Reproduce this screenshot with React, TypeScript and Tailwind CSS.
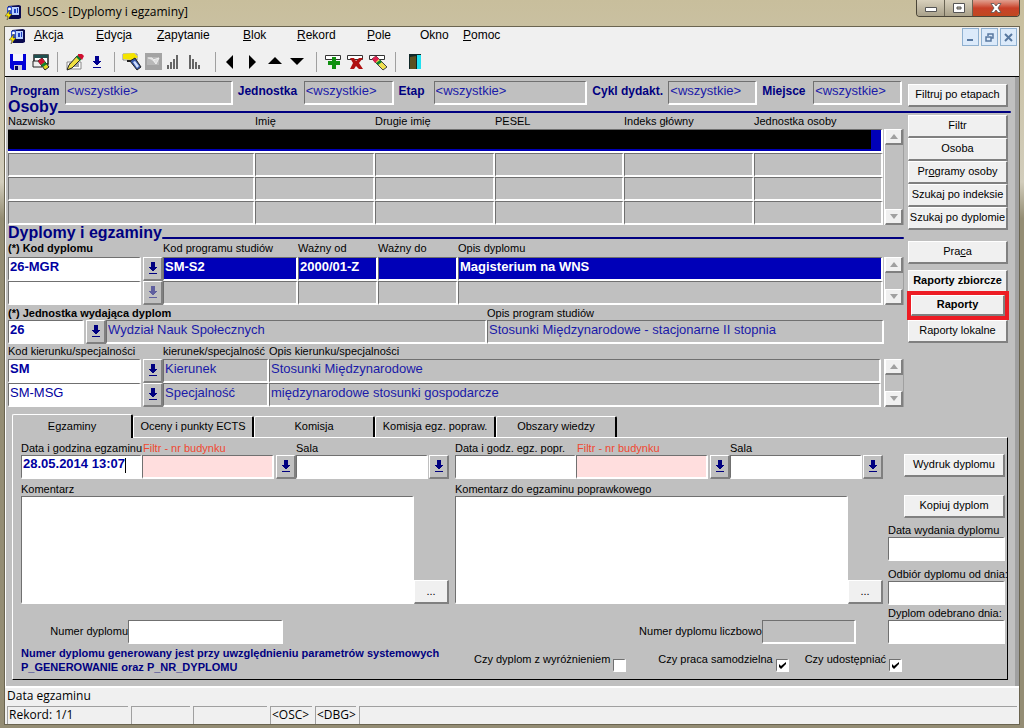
import { useState } from "react";
import type { ReactNode } from "react";

const label = "text-[11px] leading-[13px] text-black whitespace-nowrap";
const sunken = "border-t border-l border-b-2 border-r-2 border-t-[#707070] border-l-[#707070] border-b-white border-r-white";
const raised = "border border-b-2 border-r-2 border-t-white border-l-white border-b-[#808080] border-r-[#808080]";

type FieldProps = {
  name: string;
  id?: string;
  value?: string;
  tone?: "white" | "gray" | "pink" | "selected";
  bold?: boolean;
};

const tones = {
  white: "bg-white text-[#0000a0]",
  gray: "bg-[#c0c0c0] text-[#1a1aa8]",
  pink: "bg-[#ffdede] text-[#1a1aa8]",
  selected: "bg-[#0000b8] text-white",
};

function Field({ name, id, value = "", tone = "white", bold = false }: FieldProps) {
  return (
    <input
      id={id}
      aria-label={id ? undefined : name}
      defaultValue={value}
      readOnly={tone === "gray" || tone === "selected"}
      className={`block h-6 w-full min-w-0 rounded-none px-px pb-1 text-[13px] outline-none ${sunken} ${tones[tone]} ${
        bold ? "font-bold" : ""
      }`}
    />
  );
}

function LovButton({ name, disabled = false }: { name: string; disabled?: boolean }) {
  return (
    <button
      aria-label={name}
      disabled={disabled}
      className={`ml-auto flex h-6 w-5 items-center justify-center bg-[#c0c0c0] ${raised}`}
    >
      <svg width="10" height="13" viewBox="0 0 10 13" shapeRendering="crispEdges" className={disabled ? "opacity-50" : ""}>
        <path d="M3 0h4v5h2v1H8v1H7v1H6v1H4V8H3V7H2V6H1V5h2zM1 11h8v1H1z" fill="#000080" />
      </svg>
    </button>
  );
}

function PushButton({ children, className = "h-[23px]" }: { children: ReactNode; className?: string }) {
  return (
    <button
      className={`w-full bg-[#f0f0f0] text-center text-[11px] leading-[13px] whitespace-nowrap text-black ${raised} ${className}`}
    >
      {children}
    </button>
  );
}

function ScrollBar({ name, className = "" }: { name: string; className?: string }) {
  return (
    <div role="group" aria-label={name} className={`flex w-5 shrink-0 flex-col border-x border-l-white border-r-[#a0a0a0] bg-[#c0c0c0] ${className}`}>
      <button aria-label="W górę" className={`flex h-4 items-center justify-center bg-[#f0f0f0] ${raised}`}>
        <svg width="8" height="5" viewBox="0 0 8 5">
          <path d="M4 0l4 5H0z" fill="#a0a0a0" />
        </svg>
      </button>
      <div className="flex-1" />
      <button aria-label="W dół" className={`flex h-4 items-center justify-center bg-[#f0f0f0] ${raised}`}>
        <svg width="8" height="5" viewBox="0 0 8 5">
          <path d="M4 5l4-5H0z" fill="#a0a0a0" />
        </svg>
      </button>
    </div>
  );
}

function SectionTitle({ children, className = "" }: { children: ReactNode; className?: string }) {
  return (
    <div className={`flex h-4 items-end ${className}`}>
      <h2 className="text-[16px] leading-4 font-bold text-[#000080]">{children}</h2>
      <div className="mb-[2px] h-[2px] flex-1 rounded-full bg-[#000080]" />
    </div>
  );
}

function AppLogo() {
  return (
    <svg width="17" height="16" viewBox="0 0 17 16">
      <path d="M3 2l11-1 2 1v12l-2 1H4z" fill="#0a0a50" />
      <path d="M2 3l5-1v8l-5 1z" fill="#3050c8" />
      <path d="M7 3h7v8H7z" fill="#b8d0ff" />
      <path d="M9 5h2v4H9zM12 4h1v5h-1z" fill="#2040c0" />
      <circle cx="4.500" cy="5" r="1.500" fill="#fff" />
      <path d="M5 6L0 12h3l-1 4 5-6H4z" fill="#ffe800" stroke="#333" strokeWidth=".5" />
    </svg>
  );
}

// Toolbar drawings share a 22x22 box
const icons: Record<string, ReactNode> = {
  save: (
    <>
      <path d="M3 3h16v16H5l-2-2z" fill="#0000d8" />
      <path d="M6 3h10v7H6z" fill="#f4f4ff" />
      <path d="M7 14h8v5H7z" fill="#c8c8d8" />
      <path d="M8 15h3v4H8z" fill="#000060" />
    </>
  ),
  printForm: (
    <>
      <path d="M5 4h14v9H5z" fill="#fff" stroke="#222" strokeWidth="1.500" />
      <path d="M5 4h14v3H5z" fill="#205050" />
      <path d="M4 10h9v6H4z" fill="#eee" stroke="#222" />
      <path d="M9 10l4-3 7 9-4 3z" fill="#e0d820" stroke="#222" />
      <path d="M9 10l4-3 3 4-4 3z" fill="#d01030" />
      <path d="M12 14l4-3 2 2-4 3z" fill="#108030" />
    </>
  ),
  edit: (
    <>
      <path d="M3 11h14v7H3z" fill="#fff" stroke="#888" />
      <path d="M5 13h10M5 15h10" stroke="#444" />
      <path d="M3 19l2-5L13 5l4 3-9 9z" fill="#f0e040" stroke="#222" />
      <path d="M12 6l2-2 4 3-2 3z" fill="#108030" />
      <path d="M14 3h4l2 2-2 4-4-4z" fill="#d01030" />
    </>
  ),
  list: <path d="M9 5h4v5h2v1h-1v1h-1v1h-1v1h-2v-1H9v-1H8v-1H7v-1h2zM7 16h8v1H7z" fill="#000090" />,
  query: (
    <>
      <path d="M2 3h14v6H2z" fill="#fff" stroke="#888" />
      <path d="M2 3l11-1 4 4-5 3-10-1z" fill="#f4e400" />
      <path d="M6 9h10v2H6z" fill="#222" />
      <path d="M9 10l5-3 6 9-4 3z" fill="#3858a8" stroke="#222" />
      <path d="M12 11l2-1 4 5-2 2z" fill="#d0e0ff" />
    </>
  ),
  cancelQuery: (
    <>
      <path d="M2 2h17v17H2z" fill="#a4a4a4" />
      <path d="M4 6h12v8H4z" fill="#b8b8b8" />
      <path d="M5 7h4l3 4M10 9l6-2-3 6z" stroke="#eee" fill="#ddd" />
    </>
  ),
  barsUp: <path d="M2 14h2v4H2zM5 11h2v7H5zM8 8h2v10H8zM11 4h2v14h-2z" fill="#666" />,
  barsDown: <path d="M2 4h2v14H2zM5 8h2v10H5zM8 11h2v7H8zM11 14h2v4h-2z" fill="#666" />,
  left: <path d="M11 4v14L4 11z" fill="#000" />,
  right: <path d="M5 4v14l7-7z" fill="#000" />,
  up: <path d="M2 13h14L9 6z" fill="#000" />,
  down: <path d="M2 7h14l-7 7z" fill="#000" />,
  insert: (
    <>
      <path d="M2.500 4.500h15v4h-15z" fill="#fff" stroke="#333" />
      <path d="M9 6h4v4h4v4h-4v4H9v-4H5v-4h4z" fill="#109010" />
    </>
  ),
  remove: (
    <>
      <path d="M2.500 4.500h15v4h-15z" fill="#fff" stroke="#333" />
      <path d="M5 7h4l2 3 3-3h4l-4 5 4 6h-4l-3-3-2 3H5l3-6z" fill="#b01010" />
    </>
  ),
  clear: (
    <>
      <path d="M2.500 4.500h15v4h-15z" fill="#fff" stroke="#333" />
      <path d="M5 8l4-3 11 11-4 3z" fill="#f0e050" stroke="#444" />
      <path d="M5 8l4-3 3 3-4 4z" fill="#e02050" />
      <path d="M9 12l4-3 2 2-4 3z" fill="#108030" />
    </>
  ),
  exit: (
    <>
      <path d="M7 3h12v15H7z" fill="#102828" />
      <path d="M15 4h4v14h-4z" fill="#20e0f0" />
      <path d="M8 6l6-1v13H8z" fill="#5a5020" />
    </>
  ),
};

const toolbar = [
  [["save", "Zapisz"], ["printForm", "Drukuj"]],
  [["edit", "Edytuj"], ["list", "Lista wartości"]],
  [["query", "Zapytanie"], ["cancelQuery", "Anuluj zapytanie"], ["barsUp", "Sortuj rosnąco"], ["barsDown", "Sortuj malejąco"]],
  [["left", "Poprzedni blok"], ["right", "Następny blok"], ["up", "Poprzedni rekord"], ["down", "Następny rekord"]],
  [["insert", "Wstaw rekord"], ["remove", "Usuń rekord"], ["clear", "Wyczyść rekord"]],
  [["exit", "Wyjście"]],
];

const menu = [
  { first: "A", rest: "kcja", width: "w-[62px]" },
  { first: "E", rest: "dycja", width: "w-[61px]" },
  { first: "Z", rest: "apytanie", width: "w-[86px]" },
  { first: "B", rest: "lok", width: "w-[54px]" },
  { first: "R", rest: "ekord", width: "w-[70px]" },
  { first: "P", rest: "ole", width: "w-[53px]" },
  { first: "", rest: "Okno", width: "w-[43px]" },
  { first: "P", rest: "omoc", width: "w-[43px]" },
];

const filters = ["Program", "Jednostka", "Etap", "Cykl dydakt.", "Miejsce"];
const personColumns = ["Nazwisko", "Imię", "Drugie imię", "PESEL", "Indeks główny", "Jednostka osoby"];
const tabs = ["Egzaminy", "Oceny i punkty ECTS", "Komisja", "Komisja egz. popraw.", "Obszary wiedzy"];

function TitleBar() {
  return (
    <header className="flex h-[26px] items-start justify-between pl-px">
      <div className="flex items-center gap-[5px] pt-1">
        <AppLogo />
        <h1 className="font-['Open_Sans',sans-serif] text-[12px] leading-4 text-black">USOS - [Dyplomy i egzaminy]</h1>
      </div>
      <div className="flex h-[17px] overflow-hidden rounded-b-[4px] border border-t-0 border-[#4a4538]">
        <button aria-label="Minimalizuj" className="flex w-7 items-end justify-center border-r border-[#6a6454] bg-linear-to-b from-[#d8d0bc] to-[#a9a18a] pb-1">
          <svg width="12" height="5" viewBox="0 0 12 5">
            <path d="M.5.5h11v4H.5z" fill="#fff" stroke="#555" />
          </svg>
        </button>
        <button aria-label="Maksymalizuj" className="flex w-7 items-center justify-center border-r border-[#6a6454] bg-linear-to-b from-[#d8d0bc] to-[#a9a18a]">
          <svg width="12" height="10" viewBox="0 0 12 10">
            <path d="M.5.5h11v9H.5zM4 4h4v2H4z" fill="#fff" fillRule="evenodd" stroke="#555" />
          </svg>
        </button>
        <button aria-label="Zamknij" className="flex w-[46px] items-center justify-center bg-linear-to-b from-[#e0a090] via-[#c84028] to-[#c04820]">
          <svg width="12" height="10" viewBox="0 0 12 10">
            <path d="M1 .5h3l2 2.500 2-2.500h3L8 5l3 4.500H8L6 7 4 9.500H1L4 5z" fill="#fff" stroke="#555" strokeWidth=".8" />
          </svg>
        </button>
      </div>
    </header>
  );
}

function MenuBar() {
  const mdi = "flex h-[18px] w-[17px] items-center justify-center border border-[#8fb0d0] bg-[#dceafa]";
  return (
    <nav className="flex h-[22px] items-start pl-1">
      <div className="w-[25px] pt-px">
        <AppLogo />
      </div>
      {menu.map((item) => (
        <button key={item.rest} className={`text-left text-[12px] leading-4 text-black ${item.width}`}>
          <span className="underline">{item.first}</span>
          {item.rest}
        </button>
      ))}
      <div className="ml-auto flex gap-[2px] pt-px pr-[2px]">
        <button aria-label="Minimalizuj okno" className={mdi}>
          <svg width="9" height="9" viewBox="0 0 9 9"><path d="M1 6h6v2H1z" fill="#5878a0" /></svg>
        </button>
        <button aria-label="Przywróć okno" className={mdi}>
          <svg width="9" height="9" viewBox="0 0 9 9"><path d="M3 3V1h5v4H6M1 4h5v4H1z" fill="none" stroke="#5878a0" strokeWidth="1.500" /></svg>
        </button>
        <button aria-label="Zamknij okno" className={mdi}>
          <svg width="9" height="9" viewBox="0 0 9 9"><path d="M1 1l7 7M8 1L1 8" stroke="#5878a0" strokeWidth="2" /></svg>
        </button>
      </div>
    </nav>
  );
}

function ToolBar() {
  return (
    <div role="toolbar" aria-label="Narzędzia" className="flex h-7 items-start border-b border-black pt-[2px] pl-[2px]">
      {toolbar.map((group, i) => (
        <div key={i} className="flex items-center">
          {i > 0 && <div className="mx-[6px] h-5 w-px bg-[#a0a0a0]" />}
          {group.map(([icon, name]) => (
            <button key={icon} aria-label={name} className="h-[22px] w-[22px]">
              <svg width="22" height="22" viewBox="0 0 22 22">{icons[icon]}</svg>
            </button>
          ))}
        </div>
      ))}
    </div>
  );
}

function FilterRow() {
  return (
    <div className="grid grid-cols-[57px_168fr_71px_90fr_40px_154fr_81px_89fr_56px_89fr_106px] items-start">
      {filters.map((name, i) => (
        <div key={name} className="contents">
          <label
            htmlFor={`filter-${i}`}
            className={`pt-[4px] text-[12px] leading-[12px] font-bold whitespace-nowrap text-[#000080] ${i === 0 ? "pl-[2px]" : "pl-[5px]"}`}
          >
            {name}
          </label>
          <Field id={`filter-${i}`} name={name} value="<wszystkie>" tone="gray" />
        </div>
      ))}
      <div className="pl-[6px]">
        <PushButton>Filtruj po etapach</PushButton>
      </div>
    </div>
  );
}

function PersonsTable() {
  return (
    <div className="flex">
      <table className="w-full table-fixed border-collapse">
        <colgroup>
          <col />
          <col className="w-[120px]" />
          <col className="w-[120px]" />
          <col className="w-[129px]" />
          <col className="w-[130px]" />
          <col className="w-[129px]" />
        </colgroup>
        <thead>
          <tr className="h-[15px]">
            {personColumns.map((c) => (
              <th key={c} className={`p-0 text-left font-normal ${label}`}>{c}</th>
            ))}
          </tr>
        </thead>
        <tbody>
          <tr>
            {personColumns.map((c, i) => (
              <td key={c} className="p-0">
                <div className={`h-6 border-t border-b-2 border-t-[#707070] border-b-white bg-[#0000b8] pb-[2px] ${i === 5 ? "border-r-2 border-r-white pr-[10px]" : ""}`}>
                  <div className="h-full bg-black" />
                </div>
              </td>
            ))}
          </tr>
          {[2, 3, 4].map((row) => (
            <tr key={row}>
              {personColumns.map((c) => (
                <td key={c} className="p-0">
                  <Field name={`${c} ${row}`} tone="gray" />
                </td>
              ))}
            </tr>
          ))}
        </tbody>
      </table>
      <ScrollBar name="Osoby" className="ml-px mt-[15px]" />
    </div>
  );
}

function DiplomasTable() {
  return (
    <div className="flex">
      <table className="w-full table-fixed border-collapse">
        <colgroup>
          <col className="w-[133px]" />
          <col className="w-[22px]" />
          <col className="w-[135px]" />
          <col className="w-[80px]" />
          <col className="w-[80px]" />
          <col />
        </colgroup>
        <thead>
          <tr className={`h-4 text-left ${label}`}>
            <th className="p-0 font-bold" colSpan={2}>(*) Kod dyplomu</th>
            <th className="p-0 font-normal">Kod programu studiów</th>
            <th className="p-0 font-normal">Ważny od</th>
            <th className="p-0 font-normal">Ważny do</th>
            <th className="p-0 font-normal">Opis dyplomu</th>
          </tr>
        </thead>
        <tbody>
          <tr>
            <td className="p-0"><Field name="Kod dyplomu" value="26-MGR" bold /></td>
            <td className="p-0"><LovButton name="Lista kodów dyplomu" /></td>
            <td className="p-0"><Field name="Kod programu studiów" value="SM-S2" tone="selected" bold /></td>
            <td className="p-0"><Field name="Ważny od" value="2000/01-Z" tone="selected" bold /></td>
            <td className="p-0"><Field name="Ważny do" tone="selected" /></td>
            <td className="p-0"><Field name="Opis dyplomu" value="Magisterium na WNS" tone="selected" bold /></td>
          </tr>
          <tr>
            <td className="p-0"><Field name="Kod dyplomu 2" /></td>
            <td className="p-0"><LovButton name="Lista kodów dyplomu 2" disabled /></td>
            <td className="p-0"><Field name="Kod programu studiów 2" tone="gray" /></td>
            <td className="p-0"><Field name="Ważny od 2" tone="gray" /></td>
            <td className="p-0"><Field name="Ważny do 2" tone="gray" /></td>
            <td className="p-0"><Field name="Opis dyplomu 2" tone="gray" /></td>
          </tr>
        </tbody>
      </table>
      <ScrollBar name="Dyplomy" className="ml-px mt-4" />
    </div>
  );
}

function UnitRow() {
  return (
    <div className="mt-[2px] grid grid-cols-[76px_22px_381fr_397fr] pr-5">
      <label htmlFor="unit" className={`col-span-3 font-bold ${label}`}>(*) Jednostka wydająca dyplom</label>
      <label htmlFor="program-desc" className={label}>Opis program studiów</label>
      <Field id="unit" name="Jednostka" value="26" bold />
      <LovButton name="Lista jednostek" />
      <Field name="Nazwa jednostki" value="Wydział Nauk Społecznych" tone="gray" />
      <Field id="program-desc" name="Opis program studiów" value="Stosunki Międzynarodowe - stacjonarne II stopnia" tone="gray" />
    </div>
  );
}

function MajorsTable() {
  const rows = [
    { code: "SM", kind: "Kierunek", desc: "Stosunki Międzynarodowe", bold: true },
    { code: "SM-MSG", kind: "Specjalność", desc: "międzynarodowe stosunki gospodarcze", bold: false },
  ];
  return (
    <div className="flex">
      <table className="w-full table-fixed border-collapse">
        <colgroup>
          <col className="w-[133px]" />
          <col className="w-[22px]" />
          <col className="w-[106px]" />
          <col />
        </colgroup>
        <thead>
          <tr className={`h-[15px] text-left ${label}`}>
            <th className="p-0 font-normal" colSpan={2}>Kod kierunku/specjalności</th>
            <th className="p-0 font-normal">kierunek/specjalność</th>
            <th className="p-0 font-normal">Opis kierunku/specjalności</th>
          </tr>
        </thead>
        <tbody>
          {rows.map((r) => (
            <tr key={r.code}>
              <td className="p-0"><Field name={`Kod ${r.kind}`} value={r.code} bold={r.bold} /></td>
              <td className="p-0"><LovButton name={`Lista ${r.kind}`} /></td>
              <td className="p-0"><Field name="Rodzaj" value={r.kind} tone="gray" /></td>
              <td className="p-0"><Field name={`Opis ${r.kind}`} value={r.desc} tone="gray" /></td>
            </tr>
          ))}
        </tbody>
      </table>
      <ScrollBar name="Kierunki" className="ml-[3px] mt-[15px]" />
    </div>
  );
}

function SideButtons() {
  return (
    <aside className="flex w-[100px] shrink-0 flex-col pt-px">
      <PushButton>Filtr</PushButton>
      <PushButton>Osoba</PushButton>
      <PushButton>Pr<u>o</u>gramy osoby</PushButton>
      <PushButton>Szukaj po indeksie</PushButton>
      <PushButton>Szukaj po dyplomie</PushButton>
      <PushButton className="mt-[11px] h-[23px]">Pra<u>c</u>a</PushButton>
      <PushButton className="mt-[6px] h-[23px] font-bold">Raporty zbiorcze</PushButton>
      <div className="-mx-px -mt-[2px] flex border-4 border-[#ed1c24]">
        <PushButton className="h-[21px] font-bold">Raporty</PushButton>
      </div>
      <PushButton>Raporty lokalne</PushButton>
    </aside>
  );
}

function ExamGroup({ id, dateLabel, date, commentLabel }: { id: string; dateLabel: string; date?: string; commentLabel: string }) {
  return (
    <div>
      <div className="grid grid-cols-[121px_132fr_22px_132fr_21px]">
        <label htmlFor={`${id}-date`} className={label}>{dateLabel}</label>
        <label htmlFor={`${id}-building`} className={`col-span-2 pl-px ${label}`}>
          <span className="text-[#f04830]">Filtr - nr budynku</span>
        </label>
        <label htmlFor={`${id}-room`} className={`col-span-2 ${label}`}>Sala</label>
        {date ? (
          <div className={`flex h-6 bg-white pl-px ${sunken}`}>
            <input id={`${id}-date`} defaultValue={date} className="field-sizing-content pb-1 text-[13px] font-bold text-[#0000a0] outline-none" />
            <span className="mt-[2px] h-[15px] w-px bg-black" />
          </div>
        ) : (
          <Field id={`${id}-date`} name={dateLabel} />
        )}
        <Field id={`${id}-building`} name="Filtr" tone="pink" />
        <LovButton name="Lista budynków" />
        <Field id={`${id}-room`} name="Sala" />
        <LovButton name="Lista sal" />
      </div>
      <label htmlFor={`${id}-comment`} className={`mt-1 block ${label}`}>{commentLabel}</label>
      <div className="flex items-end">
        <textarea id={`${id}-comment`} className={`block h-[108px] min-w-0 flex-1 resize-none bg-white text-[13px] outline-none ${sunken}`} />
        <button aria-label={`${commentLabel} - edytor`} className={`h-6 w-[35px] bg-[#f0f0f0] text-[11px] leading-[13px] ${raised}`}>...</button>
      </div>
    </div>
  );
}

function Check({ text, checked = false, className = "" }: { text: string; checked?: boolean; className?: string }) {
  return (
    <label className={`flex items-start gap-[3px] ${label} ${className}`}>
      {text}
      <span className="mt-[6px] grid">
        <input type="checkbox" defaultChecked={checked} className={`peer [grid-area:1/1] h-[13px] w-[13px] appearance-none bg-white ${sunken}`} />
        <svg width="13" height="13" viewBox="0 0 13 13" className="pointer-events-none invisible [grid-area:1/1] peer-checked:visible">
          <path d="M3 5v3l2 2 5-5V3L5 7z" fill="#000" />
        </svg>
      </span>
    </label>
  );
}

function ExamPanel() {
  return (
    <section className="border border-t-white border-r-black border-b-black border-l-white pt-1 pr-[2px] pb-[5px] pl-2">
      <div className="flex justify-between">
        <div className="flex-1">
          <div className="grid grid-cols-2 gap-x-[6px]">
            <ExamGroup id="exam" dateLabel="Data i godzina egzaminu" date="28.05.2014 13:07" commentLabel="Komentarz" />
            <ExamGroup id="retake" dateLabel="Data i godz. egz. popr." commentLabel="Komentarz do egzaminu poprawkowego" />
          </div>
          <div className="mt-4 flex items-center pr-[27px]">
            <label htmlFor="diploma-no" className={`w-[107px] text-right ${label}`}>Numer dyplomu</label>
            <div className="w-[155px]"><Field id="diploma-no" name="Numer dyplomu" /></div>
            <label htmlFor="diploma-num" className={`ml-auto ${label}`}>Numer dyplomu liczbowo</label>
            <div className="w-[94px]"><Field id="diploma-num" name="Numer dyplomu liczbowo" tone="gray" /></div>
          </div>
        </div>
        <div className="ml-[5px] flex w-[117px] shrink-0 flex-col pt-3">
          <PushButton className="ml-auto h-[23px] max-w-[101px] shrink-0">Wydruk dyplomu</PushButton>
          <PushButton className="mt-[18px] mb-[6px] ml-auto h-[23px] max-w-[101px] shrink-0">Kopiuj dyplom</PushButton>
          <label htmlFor="issued" className={label}>Data wydania dyplomu</label>
          <Field id="issued" name="Data wydania dyplomu" />
          <label htmlFor="pickup" className={`mt-[7px] ${label}`}>Odbiór dyplomu od dnia:</label>
          <Field id="pickup" name="Odbiór dyplomu od dnia" />
          <label htmlFor="received" className={`mt-[2px] ${label}`}>Dyplom odebrano dnia:</label>
          <Field id="received" name="Dyplom odebrano dnia" />
        </div>
      </div>
      <div className="mt-[2px] flex items-start">
        <p className="text-[11px] leading-[14px] font-bold text-[#000080]">
          Numer dyplomu generowany jest przy uwzględnieniu parametrów systemowych
          <br />
          P_GENEROWANIE oraz P_NR_DYPLOMU
        </p>
        <div className="mr-[103px] ml-auto flex pt-[7px]">
          <Check text="Czy dyplom z wyróżnieniem" />
          <Check text="Czy praca samodzielna" checked className="ml-8" />
          <Check text="Czy udostępniać" checked className="ml-4" />
        </div>
      </div>
    </section>
  );
}

function StatusBar() {
  const cell = "h-[18px] border-t border-l border-[#a0a0a0] pl-px";
  return (
    <footer className="border-t-2 border-white bg-[#f0f0f0] px-[2px] font-['Open_Sans',sans-serif] text-[12px] leading-[16px] text-black">
      <p className="h-[18px]">Data egzaminu</p>
      <div className="flex gap-[3px]">
        <div className={`w-[121px] ${cell}`}>Rekord: 1/1</div>
        <div className={`w-[59px] ${cell}`} />
        <div className={`w-[74px] ${cell}`} />
        <div className={`w-[42px] ${cell}`}>&lt;OSC&gt;</div>
        <div className={`w-[41px] ${cell}`}>&lt;DBG&gt;</div>
        <div className={`flex-1 ${cell}`} />
      </div>
    </footer>
  );
}

export default function App() {
  const [activeTab, setActiveTab] = useState(0);

  return (
    <div className="flex min-h-screen flex-col bg-linear-to-b from-[#c8be9c] from-0% via-[#d2cdbc] via-25% to-[#948d74] to-30% px-1 pb-[3px] font-['Liberation_Sans',Arial,sans-serif]">
      <TitleBar />
      <div className="flex flex-1 flex-col border border-[#6a6450] bg-[#f0f0f0]">
        <MenuBar />
        <ToolBar />
        <main className="flex-1 border-r-4 border-l border-r-[#a0a0a0] border-l-white bg-[#c0c0c0] pt-1 pr-[7px] pb-[5px] pl-[2px]">
          <FilterRow />
          <SectionTitle className="-mt-2 -mr-[3px]">Osoby</SectionTitle>
          <div className="-mt-px flex gap-1">
            <div className="min-w-0 flex-1">
              <PersonsTable />
              <SectionTitle>Dyplomy i egzaminy</SectionTitle>
              <DiplomasTable />
              <UnitRow />
              <MajorsTable />
            </div>
            <SideButtons />
          </div>
          <div className="mt-[7px] ml-1">
            <div role="tablist" className="flex items-end">
              {tabs.map((tab, i) => (
                <button
                  key={tab}
                  role="tab"
                  aria-selected={i === activeTab}
                  onClick={() => setActiveTab(i)}
                  className={`w-[121px] rounded-t-[2px] border-t border-r-2 border-l border-t-white border-r-black border-l-white bg-[#c0c0c0] text-center ${label} ${
                    i === activeTab ? "z-10 -mb-px h-6" : "h-[21px]"
                  }`}
                >
                  {tab}
                </button>
              ))}
            </div>
            <ExamPanel />
          </div>
        </main>
        <StatusBar />
      </div>
    </div>
  );
}
